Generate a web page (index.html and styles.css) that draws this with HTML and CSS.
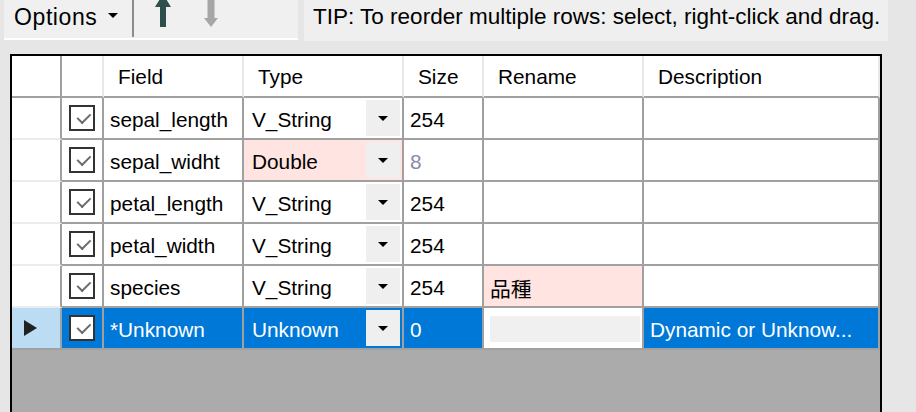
FILE: index.html
```html
<!DOCTYPE html>
<html lang="en">
<head>
    <meta charset="UTF-8">
    <meta name="viewport" content="width=device-width, initial-scale=1.0">
    <title>Select Fields</title>
    <link rel="stylesheet" href="styles.css">
</head>
<body>
    <div class="top">
        <div class="toolstrip">
            <div class="options">Options <span class="caret"></span></div>
            <div class="sep"></div>
            <svg class="arrow-up" width="18" height="28" viewBox="0 0 18 28">
                <path d="M9 -6 L17 7 L12 7 L12 27 L6 27 L6 7 L1 7 Z" fill="#2f4f4f"/>
            </svg>
            <svg class="arrow-down" width="16" height="28" viewBox="0 0 16 28">
                <path d="M4.5 0 L11.5 0 L11.5 18 L15 18 L8 27 L1 18 L4.5 18 Z" fill="#a6a6a6"/>
            </svg>
        </div>
        <div class="tip">TIP: To reorder multiple rows: select, right-click and drag.</div>
    </div>

    <div class="grid">
        <div class="row head">
            <div class="cell rowhead"></div>
            <div class="cell"></div>
            <div class="cell">Field</div>
            <div class="cell">Type</div>
            <div class="cell">Size</div>
            <div class="cell">Rename</div>
            <div class="cell">Description</div>
        </div>

        <div class="row">
            <div class="cell rowhead"></div>
            <div class="cell check"><span class="box"></span></div>
            <div class="cell">sepal_length</div>
            <div class="cell type">V_String <span class="drop"></span></div>
            <div class="cell">254</div>
            <div class="cell"></div>
            <div class="cell"></div>
        </div>

        <div class="row">
            <div class="cell rowhead"></div>
            <div class="cell check"><span class="box"></span></div>
            <div class="cell">sepal_widht</div>
            <div class="cell type changed">Double <span class="drop"></span></div>
            <div class="cell muted">8</div>
            <div class="cell"></div>
            <div class="cell"></div>
        </div>

        <div class="row">
            <div class="cell rowhead"></div>
            <div class="cell check"><span class="box"></span></div>
            <div class="cell">petal_length</div>
            <div class="cell type">V_String <span class="drop"></span></div>
            <div class="cell">254</div>
            <div class="cell"></div>
            <div class="cell"></div>
        </div>

        <div class="row">
            <div class="cell rowhead"></div>
            <div class="cell check"><span class="box"></span></div>
            <div class="cell">petal_width</div>
            <div class="cell type">V_String <span class="drop"></span></div>
            <div class="cell">254</div>
            <div class="cell"></div>
            <div class="cell"></div>
        </div>

        <div class="row">
            <div class="cell rowhead"></div>
            <div class="cell check"><span class="box"></span></div>
            <div class="cell">species</div>
            <div class="cell type">V_String <span class="drop"></span></div>
            <div class="cell">254</div>
            <div class="cell changed cjk">品種</div>
            <div class="cell"></div>
        </div>

        <div class="row selected">
            <div class="cell rowhead"><span class="pointer"></span></div>
            <div class="cell check"><span class="box"></span></div>
            <div class="cell">*Unknown</div>
            <div class="cell type">Unknown <span class="drop"></span></div>
            <div class="cell">0</div>
            <div class="cell editing"><span class="editbox"></span></div>
            <div class="cell">Dynamic or Unknow...</div>
        </div>
    </div>
</body>
</html>
```

FILE: styles.css
```css
html, body {
    margin: 0;
    height: 100%;
    overflow: hidden;
}

body {
    font-family: "Liberation Sans", Arial, sans-serif;
    background-color: #e6e6e6;
    color: #000;
}

/* toolbar + tip */
.top {
    display: flex;
    align-items: flex-start;
}

.toolstrip {
    display: flex;
    align-items: flex-start;
    width: 284px;
    height: 38px;
    margin-left: 4px;
    padding-left: 10px;
    background: #f0f0f0;
    border-bottom: 2px solid #fff;
}

.options {
    display: flex;
    align-items: center;
    height: 34px;
    font-size: 23px;
    letter-spacing: 0.6px;
}

.caret {
    display: inline-block;
    margin-left: 11px;
    margin-top: -3px;
    border-left: 5px solid transparent;
    border-right: 5px solid transparent;
    border-top: 5px solid #000;
}

.sep {
    align-self: stretch;
    width: 2px;
    margin-left: 14px;
    margin-bottom: 1px;
    background: #8c8c8c;
}

.arrow-up {
    margin-left: 20px;
}

.arrow-down {
    margin-left: 31px;
}

.tip {
    width: 584px;
    height: 41px;
    margin-left: 6px;
    padding-left: 9px;
    box-sizing: border-box;
    background: #efefef;
    font-size: 22.5px;
    line-height: 34px;
    white-space: nowrap;
}

/* data grid */
.grid {
    width: 868px;
    height: 356px;
    margin: 13px 0 0 10px;
    border: 2px solid #000;
    border-bottom: none;
    background: #ababab;
    font-size: 20.8px;
}

.row {
    display: grid;
    grid-template-columns: 50px 42px 140px 160px 80px 160px 236px;
    height: 42px;
}

.cell {
    display: flex;
    align-items: center;
    box-sizing: border-box;
    padding-left: 6px;
    padding-top: 4px;
    background: #fff;
    border-right: 2px solid #a0a0a0;
    border-bottom: 2px solid #a0a0a0;
    white-space: nowrap;
    overflow: hidden;
}

.cell.rowhead {
    padding-top: 0;
    padding-left: 12px;
    border-bottom-color: #ececec;
}

.head .cell {
    padding-left: 14px;
    padding-top: 2px;
    border-right-color: #e8e8e8;
}

.head .cell.rowhead {
    border-right-color: #a0a0a0;
    border-bottom-color: #a0a0a0;
}

.cell.check {
    padding: 0;
    justify-content: center;
}

.box {
    position: relative;
    width: 26px;
    height: 26px;
    box-sizing: border-box;
    border: 2px solid #333;
    background: #fff;
}

.box::after {
    content: "";
    position: absolute;
    left: 5px;
    top: 3px;
    width: 11px;
    height: 6px;
    border-left: 2px solid #6b6b6b;
    border-bottom: 2px solid #6b6b6b;
    transform: rotate(-45deg) translate(-1px, 3px);
}

.cell.type {
    padding-left: 8px;
}

.drop {
    display: flex;
    align-items: center;
    justify-content: center;
    width: 34px;
    height: 36px;
    margin-left: auto;
    margin-right: 2px;
    margin-top: -4px;
    background: #efefef;
}

.drop::after {
    content: "";
    border-left: 5px solid transparent;
    border-right: 5px solid transparent;
    border-top: 5px solid #000;
}

.changed {
    background: #ffe4e1;
}

.muted {
    color: #8a8aa8;
}

.cjk {
    font-family: "Noto Sans CJK JP", "Liberation Sans", sans-serif;
}

/* selected row */
.selected .cell {
    background: #0078d7;
    color: #fff;
}

.selected .cell.rowhead {
    background: #bcdcf4;
    border-bottom-color: #a0a0a0;
}

.pointer {
    width: 0;
    height: 0;
    border-top: 8px solid transparent;
    border-bottom: 8px solid transparent;
    border-left: 13px solid #222;
}

.selected .cell.editing {
    background: #fff;
    padding: 0;
    align-items: stretch;
}

.editbox {
    flex: 1;
    margin: 8px 2px 6px 6px;
    background: #f0f0f0;
}
```
